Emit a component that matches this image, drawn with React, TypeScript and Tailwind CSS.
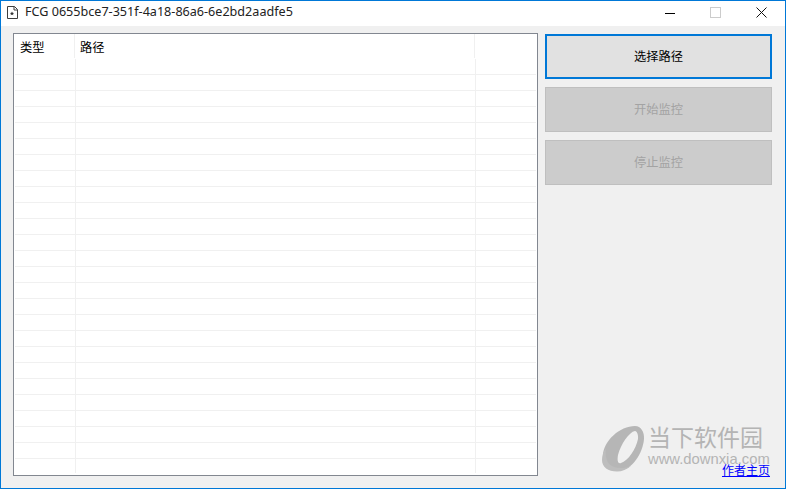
import React from 'react';

const rows = Array.from({ length: 25 }, (_, i) => i);

function FileIcon() {
  return (
    <svg width="11" height="13" viewBox="0 0 11 13" className="mr-[7px] shrink-0">
      <path d="M0.5 0.5H7.500L10.500 3.500V12.500H0.5Z" fill="#fff" stroke="#3c3c3c" />
      <path d="M7 0.5V4H10.500" fill="none" stroke="#3c3c3c" />
      <path d="M5 5.500l.6 1.300 1.400.1-1 1 .3 1.400-1.300-.7-1.300.7.3-1.400-1-1 1.400-.1Z" fill="#333" />
    </svg>
  );
}

function TitleBar() {
  return (
    <div className="flex h-[25px] shrink-0 items-center bg-white pl-[6px] pb-[2px]">
      <FileIcon />
      <span className="font-['Noto_Sans',sans-serif] text-[12.6px] leading-none text-[#222]">
        FCG 0655bce7-351f-4a18-86a6-6e2bd2aadfe5
      </span>
      <div className="ml-auto flex items-center pr-[18px]">
        <svg width="10" height="10" viewBox="0 0 10 10" className="mr-[35px]">
          <path d="M0 5.500H10" stroke="#000" strokeWidth="1" />
        </svg>
        <svg width="11" height="11" viewBox="0 0 11 11" className="mr-[35px]">
          <rect x="0.5" y="0.5" width="10" height="10" fill="none" stroke="#cccccc" />
        </svg>
        <svg width="11" height="11" viewBox="0 0 11 11">
          <path d="M0.5 0.5L10.500 10.500M10.500 0.5L0.5 10.500" stroke="#111" strokeWidth="1" />
        </svg>
      </div>
    </div>
  );
}

function FileList() {
  return (
    <div className="flex h-[443px] w-[525px] shrink-0 flex-col overflow-hidden border border-[#828790] bg-white">
      {/* Header */}
      <div className="flex h-[25px] shrink-0 text-[12.25px] leading-[27px] text-black">
        <div className="w-[61px] pl-[6px]">
          <div className="h-[24px] border-r border-[#f0f0f0]">类型</div>
        </div>
        <div className="w-[400px] pl-[5px]">
          <div className="-ml-[5px] h-[24px] border-r border-[#f0f0f0] pl-[5px]">路径</div>
        </div>
      </div>
      {/* Rows */}
      <div className="flex flex-1 flex-col">
        {rows.map((i) => (
          <div key={i} className="mx-[1px] flex h-[16px] shrink-0 border-b border-[#f0f0f0]">
            <div className="w-[61px] border-r border-[#f0f0f0]" />
            <div className="w-[400px] border-r border-[#f0f0f0]" />
          </div>
        ))}
        <div className="ml-[1px] flex h-[14px] shrink-0">
          <div className="w-[61px] border-r border-[#f0f0f0]" />
          <div className="w-[400px] border-r border-[#f0f0f0]" />
        </div>
      </div>
    </div>
  );
}

function Watermark() {
  return (
    <div className="pointer-events-none absolute left-[599px] top-[423px] flex items-start">
      <svg width="46" height="50" viewBox="0 0 46 50" className="mr-[2px] shrink-0">
        <path
          fillRule="evenodd"
          fill="#b6b6b6"
          d="M35 2C41 2 44.500 8 44 15C43 29 32 46 20 46C9 46 3 40 3 32C3 17 20 2 35 2ZM35 7C29 8 21 20 18 31C17 37 18 40 21 39C28 37 36 25 38 15C38.500 11 37 7 35 7Z"
        />
        <path
          fill="#bdbdbd"
          d="M6 24C3 28 2 32 2 36C2 43 8 47.500 17 47.500C22 47.500 27 45.500 31 42C24 45 14 45 9 40C6 36 5 30 6 24Z"
        />
      </svg>
      <div className="flex flex-col font-['Liberation_Sans',sans-serif] text-[#b4b4b4]">
        <span className="-mt-[1px] font-['Noto_Sans_CJK_SC',sans-serif] text-[23px] leading-[26px] whitespace-nowrap">当下软件园</span>
        <span className="mt-[2px] text-[14.8px] leading-[16px] whitespace-nowrap">www.downxia.com</span>
      </div>
    </div>
  );
}

export default function App() {
  return (
    <div className="relative flex h-[489px] w-[786px] flex-col overflow-hidden border border-[#0078d7] bg-[#f0f0f0] font-['Noto_Sans_CJK_SC',sans-serif]">
      <TitleBar />
      <div className="flex flex-1 pl-[12px] pt-[7px]">
        <FileList />
        <div className="ml-[7px] flex h-[444px] w-[227px] flex-col pt-[1px] text-[12.25px]">
          <button className="h-[45px] border-2 border-[#0078d7] bg-[#e1e1e1] text-black">选择路径</button>
          <button disabled className="mt-[8px] h-[45px] border border-[#bfbfbf] bg-[#cccccc] text-[#a3a3a3]">开始监控</button>
          <button disabled className="mt-[8px] h-[45px] border border-[#bfbfbf] bg-[#cccccc] text-[#a3a3a3]">停止监控</button>
          <a href="#" className="relative z-10 mt-auto self-end pr-[2px] text-[12px] leading-[14px] text-[#0000ff] underline">作者主页</a>
        </div>
      </div>
      <Watermark />
    </div>
  );
}
